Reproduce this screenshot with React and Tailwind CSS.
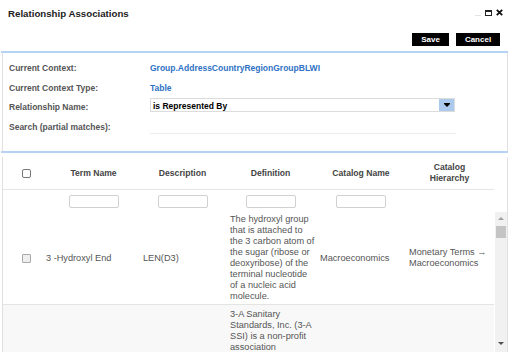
export default function App() {
  const cols = ["w-[43px]", "w-[95px]", "w-[83px]", "w-[93px]", "w-[88px]", "w-[89px]"];
  return (
    <div className="w-[512px] h-[352px] overflow-hidden bg-white font-['Liberation_Sans',Arial,sans-serif]">
      {/* Title bar */}
      <div className="h-[28px] flex items-center justify-between pl-[8px] pr-[9px]">
        <div className="text-[9.7px] font-bold text-[#222] leading-none">Relationship Associations</div>
        <div className="flex items-center gap-[4px] mt-[-3px]">
          <div className="w-[6px] h-[1px] bg-[#e2e2e2] mt-[6px]" />
          <div className="w-[7px] h-[6px] border border-[#222] border-t-2" />
          <svg width="7" height="7" viewBox="0 0 7 7">
            <path d="M0.8 0.8 L6.2 6.2 M6.2 0.8 L0.8 6.2" stroke="#111" strokeWidth="1.8" />
          </svg>
        </div>
      </div>

      {/* Buttons */}
      <div className="flex justify-end gap-[7px] pr-[12px] mt-[5px]">
        <div className="w-[37px] h-[13px] bg-black text-white text-[8px] font-bold flex items-center justify-center leading-none">Save</div>
        <div className="w-[44px] h-[13px] bg-black text-white text-[8px] font-bold flex items-center justify-center leading-none">Cancel</div>
      </div>

      {/* Context panel */}
      <div className="mt-[5px] ml-[1px] w-[507px] border-t-2 border-b-2 border-t-[#b6d3f3] border-b-[#b6d3f3]">
        <div className="ml-[1px] border-l border-r border-[#e0e0e0] pt-[5px] pb-[14px] pl-[6px] text-[8.5px] leading-none">
          <div className="flex items-center h-[20px]">
            <div className="w-[141px] font-bold text-[#555]">Current Context:</div>
            <div className="font-bold text-[#2f72c4]">Group.AddressCountryRegionGroupBLWI</div>
          </div>
          <div className="flex items-center h-[20px]">
            <div className="w-[141px] font-bold text-[#555]">Current Context Type:</div>
            <div className="font-bold text-[#2f72c4]">Table</div>
          </div>
          <div className="flex items-center h-[19px]">
            <div className="w-[141px] font-bold text-[#555]">Relationship Name:</div>
            <div className="self-start w-[305px] h-[14px] border border-[#dcdcdc] flex items-center justify-between">
              <div className="pl-[2px] pt-[2px] font-bold text-black">is Represented By</div>
              <div className="w-[15px] h-full bg-[#abcaee] flex items-center justify-center">
                <div className="flex flex-col items-center">
                  <div className="w-[6px] h-[1px] bg-black" />
                  <div className="w-0 h-0 border-l-[3px] border-r-[3px] border-t-[3px] border-l-transparent border-r-transparent border-t-black" />
                </div>
              </div>
            </div>
          </div>
          <div className="flex items-center h-[20px]">
            <div className="w-[141px] font-bold text-[#555]">Search (partial matches):</div>
            <div className="self-start mt-[2px] w-[306px] h-[15px] border-b border-[#ececec]" />
          </div>
        </div>
      </div>

      {/* Table */}
      <div className="mt-[4px] ml-[2px] w-[506px] h-[195px] border-l border-r border-[#e0e0e0] flex flex-col">
        {/* header */}
        <div className="flex w-[491px] h-[33px] border-b border-[#e6e6e6] text-[8.6px] font-bold text-[#444] leading-[11px]">
          <div className={`${cols[0]} flex items-center justify-center pl-[3px]`}>
            <div className="w-[9px] h-[9px] border border-[#777] rounded-[2px] bg-white" />
          </div>
          <div className={`${cols[1]} flex items-center justify-center`}>Term Name</div>
          <div className={`${cols[2]} flex items-center justify-center`}>Description</div>
          <div className={`${cols[3]} flex items-center justify-center`}>Definition</div>
          <div className={`${cols[4]} flex items-center justify-center`}>Catalog Name</div>
          <div className={`${cols[5]} flex items-center justify-center text-center`}>Catalog<br />Hierarchy</div>
        </div>
        {/* filter row */}
        <div className="flex w-[491px] h-[22px] items-start pt-[5px]">
          <div className={cols[0]} />
          <div className={`${cols[1]} flex justify-center`}><div className="w-[50px] h-[13px] border border-[#d0d0d0] rounded-[2px]" /></div>
          <div className={`${cols[2]} flex justify-center`}><div className="w-[50px] h-[13px] border border-[#d0d0d0] rounded-[2px]" /></div>
          <div className={`${cols[3]} flex justify-center`}><div className="w-[50px] h-[13px] border border-[#d0d0d0] rounded-[2px]" /></div>
          <div className={`${cols[4]} flex justify-center`}><div className="w-[50px] h-[13px] border border-[#d0d0d0] rounded-[2px]" /></div>
          <div className={cols[5]} />
        </div>
        {/* body */}
        <div className="flex flex-1 min-h-0">
          <div className="w-[491px] overflow-hidden text-[9.2px] text-[#555] leading-[11px]">
            <div className="flex h-[93px] border-b border-[#e4e4e4] items-center">
              <div className={`${cols[0]} flex justify-center pl-[3px]`}>
                <div className="w-[9px] h-[9px] border border-[#aaa] bg-[#eeeeee] rounded-[1px]" />
              </div>
              <div className={`${cols[1]}`}>3 -Hydroxyl End</div>
              <div className={`${cols[2]} pl-[2px]`}>LEN(D3)</div>
              <div className={`${cols[3]} pl-[6px] pr-[2px]`}>The hydroxyl group that is attached to the 3 carbon atom of the sugar (ribose or deoxyribose) of the terminal nucleotide of a nucleic acid molecule.</div>
              <div className={`${cols[4]} pl-[3px]`}>Macroeconomics</div>
              <div className={`${cols[5]} pl-[4px]`}>Monetary Terms →<br />Macroeconomics</div>
            </div>
            <div className="flex h-[80px] bg-[#f8f8f8] items-start pt-[4px]">
              <div className={cols[0]} />
              <div className={cols[1]} />
              <div className={cols[2]} />
              <div className={`${cols[3]} pl-[6px] pr-[2px]`}>3-A Sanitary Standards, Inc. (3-A SSI) is a non-profit association</div>
              <div className={cols[4]} />
              <div className={cols[5]} />
            </div>
          </div>
          {/* scrollbar */}
          <div className="ml-[1px] w-[12px] bg-[#f1f1f1] flex flex-col items-center">
            <div className="h-[13px] flex items-center justify-center">
              <div className="w-0 h-0 border-l-[3px] border-r-[3px] border-b-[3px] border-l-transparent border-r-transparent border-b-[#a0a0a0]" />
            </div>
            <div className="mt-[1px] w-[10px] h-[12px] bg-[#c4c4c4]" />
            <div className="flex-1" />
            <div className="h-[12px] mb-[3px] flex items-center justify-center">
              <div className="w-0 h-0 border-l-[3px] border-r-[3px] border-t-[3px] border-l-transparent border-r-transparent border-t-[#505050]" />
            </div>
          </div>
        </div>
      </div>
    </div>
  );
}
